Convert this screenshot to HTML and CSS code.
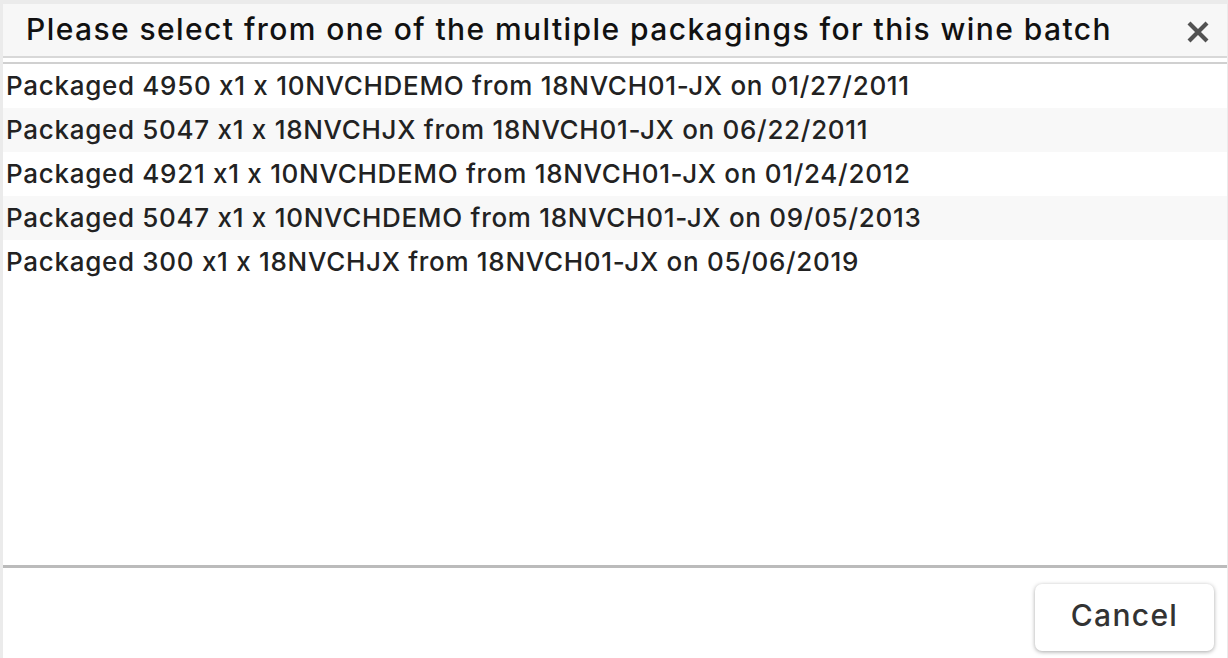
FILE: index.html
```html
<!DOCTYPE html>
<html>
<head>
<meta charset="utf-8">
<link rel="stylesheet" href="styles.css">
</head>
<body>
<div class="dialog">
  <div class="header">
    <div class="title">Please select from one of the multiple packagings for this wine batch</div>
    <button class="close" aria-label="Close">
      <svg width="24" height="24" viewBox="0 0 24 24"><path d="M3 3 L21 21 M21 3 L3 21" stroke="#525252" stroke-width="4.2" stroke-linecap="butt"/></svg>
    </button>
  </div>
  <div class="list">
    <div class="row">Packaged 4950 x1 x 10NVCHDEMO from 18NVCH01-JX on 01/27/2011</div>
    <div class="row alt">Packaged 5047 x1 x 18NVCHJX from 18NVCH01-JX on 06/22/2011</div>
    <div class="row">Packaged 4921 x1 x 10NVCHDEMO from 18NVCH01-JX on 01/24/2012</div>
    <div class="row alt">Packaged 5047 x1 x 10NVCHDEMO from 18NVCH01-JX on 09/05/2013</div>
    <div class="row">Packaged 300 x1 x 18NVCHJX from 18NVCH01-JX on 05/06/2019</div>
  </div>
  <div class="footer">
    <button class="btn">Cancel</button>
  </div>
</div>
</body>
</html>
```
FILE: styles.css
```css
html, body {
  margin: 0;
  padding: 0;
  height: 100%;
}
body {
  background: #ebebeb;
  font-family: Inter, "Noto Sans", sans-serif;
  color: #222;
  overflow: hidden;
}
.dialog {
  margin: 4px 1px 0 3px;
  height: 654px;
  background: #fff;
  display: flex;
  flex-direction: column;
}
.header {
  height: 52px;
  background: #f7f7f7;
  border-bottom: 2px solid #d8d8d8;
  margin-bottom: 4px;
  display: flex;
  align-items: center;
  justify-content: space-between;
  padding: 0 17px 0 23px;
  box-sizing: content-box;
}
.title {
  font-size: 30px;
  font-weight: 500;
  color: #111;
  letter-spacing: 1.42px;
  margin-top: -3px;
  white-space: nowrap;
}
.close {
  border: 0;
  background: none;
  padding: 0;
  margin-top: 4px;
  display: flex;
  cursor: pointer;
}
.list {
  flex: 1;
  border-top: 2px solid #d0d0d0;
}
.row {
  height: 44px;
  line-height: 44px;
  padding-left: 3px;
  font-size: 26px;
  font-weight: 500;
  color: #222;
  letter-spacing: 0.7px;
  white-space: nowrap;
}
.row.alt {
  background: #f8f8f8;
}
.footer {
  border-top: 3px solid #bbb;
  height: 93px;
  display: flex;
  justify-content: flex-end;
  align-items: flex-start;
  padding: 16px 13px 0 0;
  box-sizing: border-box;
}
.btn {
  width: 179px;
  height: 67px;
  border: 0;
  border-radius: 7px;
  background: #fff;
  box-shadow: 0 1px 4px rgba(0,0,0,0.35);
  font-family: Inter, "Noto Sans", sans-serif;
  font-size: 30px;
  font-weight: 500;
  color: #333;
  letter-spacing: 1.3px;
  padding: 0 0 6px;
  cursor: pointer;
}
```
